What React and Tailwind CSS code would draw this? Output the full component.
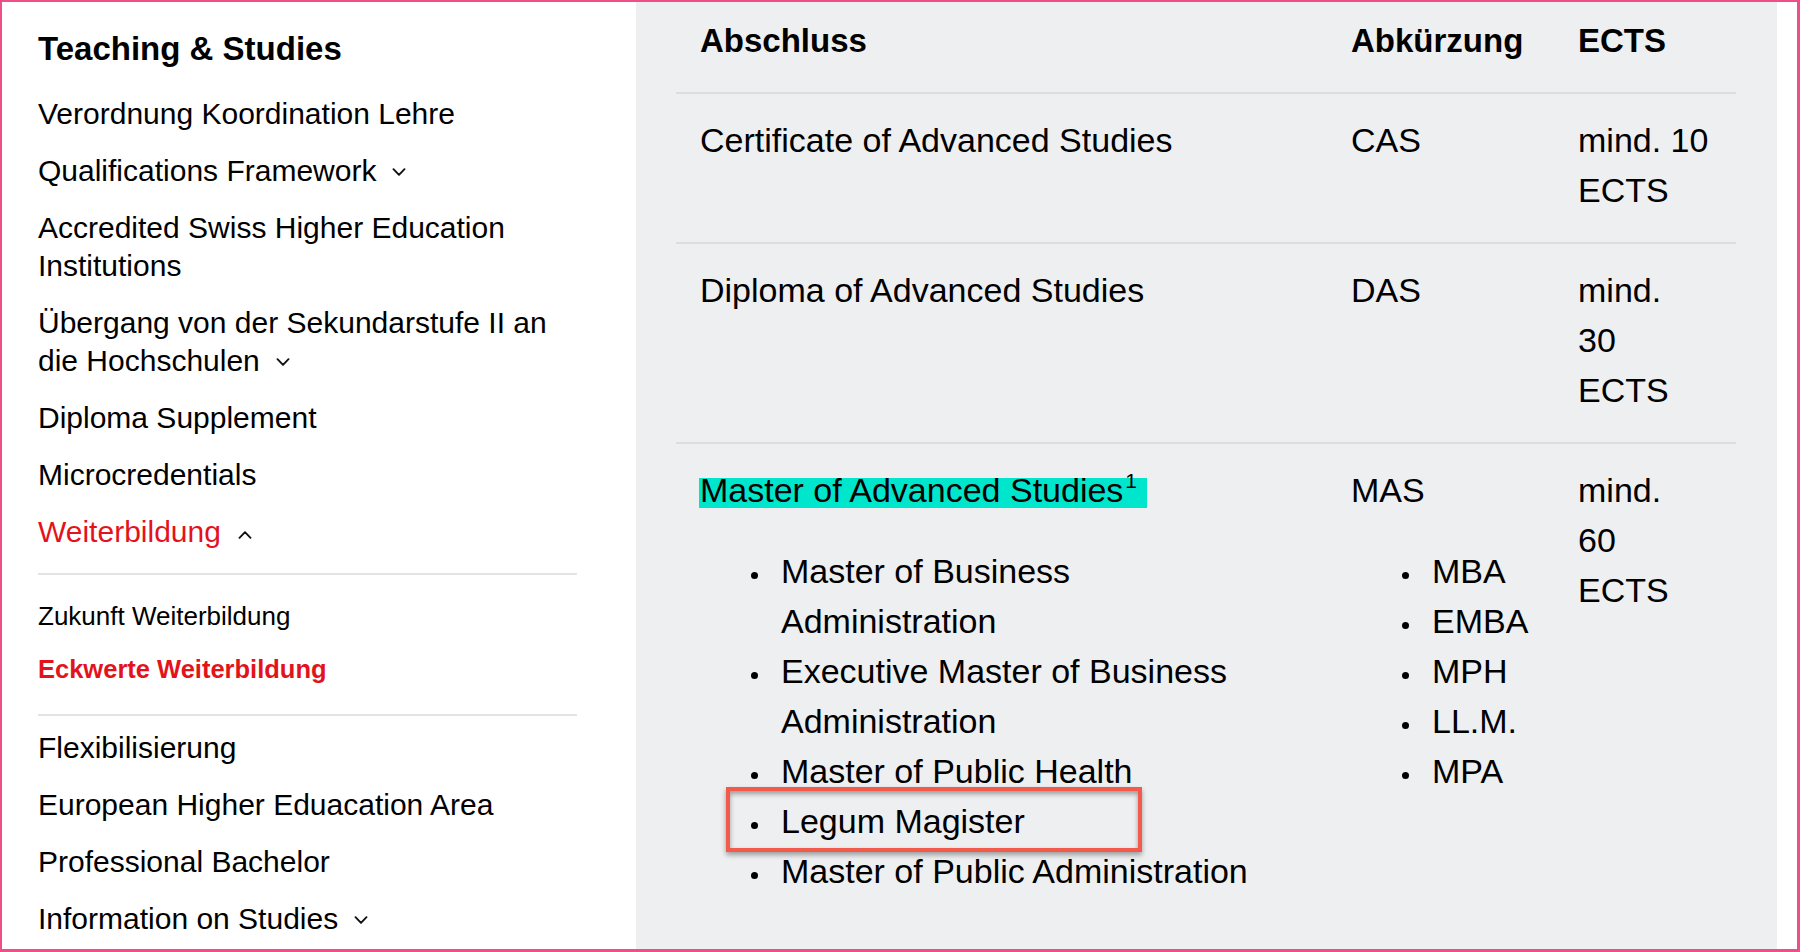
import React from "react";

const Chevron = ({ up = false }) => (
  <svg
    width="14"
    height="8"
    viewBox="0 0 14 8"
    fill="none"
    stroke="#111"
    strokeWidth="1.9"
    strokeLinecap="round"
    strokeLinejoin="round"
    className={up ? "inline-block ml-[17px] align-[3px]" : "inline-block ml-[16px] align-[5px]"}
  >
    <polyline points={up ? "1.5,6.8 7,1.2 12.5,6.8" : "1.5,1.2 7,6.8 12.5,1.2"} />
  </svg>
);

const NavItem = ({ children, className = "mt-[19px]" }) => (
  <div className={`${className} text-[30px] leading-[38px] text-black`}>{children}</div>
);

const Li = ({ children, annotate = false }) => (
  <li className="relative flex">
    <span className="mt-[26px] w-[7px] h-[7px] rounded-full bg-black shrink-0" />
    <span className="ml-[23px]">{children}</span>
    {annotate && (
      <span className="absolute left-[-25px] top-[-9px] w-[416px] h-[65px] border-4 border-[#f25a4c] shadow-[0_3px_5px_rgba(0,0,0,0.35),inset_0_3px_5px_rgba(0,0,0,0.35)]" />
    )}
  </li>
);

export default function App() {
  return (
    <div className="w-[1800px] h-[952px] box-border border-t-2 border-l-2 border-r-[3px] border-b-[3px] border-[#f04e89] bg-white flex overflow-hidden font-['Liberation_Sans',Arial,sans-serif] text-black">
      {/* Sidebar */}
      <aside className="w-[634px] shrink-0 pl-[36px] pt-[27px]">
        <div className="w-[539px]">
          <div className="text-[33px] leading-[40px] font-bold">Teaching &amp; Studies</div>
          <NavItem className="mt-[26px]">Verordnung Koordination Lehre</NavItem>
          <NavItem>
            Qualifications Framework
            <Chevron />
          </NavItem>
          <NavItem>Accredited Swiss Higher Education Institutions</NavItem>
          <NavItem>
            Übergang von der Sekundarstufe II an die Hochschulen
            <Chevron />
          </NavItem>
          <NavItem>Diploma Supplement</NavItem>
          <NavItem>Microcredentials</NavItem>
          <NavItem>
            <span className="text-[#e3131c]">Weiterbildung</span>
            <Chevron up />
          </NavItem>
          <div className="mt-[22px] h-[2px] bg-[#e3e3e4]" />
          <div className="mt-[22px] text-[26px] leading-[38px]">Zukunft Weiterbildung</div>
          <div className="mt-[15px] text-[25.5px] leading-[38px] font-bold text-[#e3131c]">
            Eckwerte Weiterbildung
          </div>
          <div className="mt-[26px] h-[2px] bg-[#e3e3e4]" />
          <NavItem className="mt-[13px]">Flexibilisierung</NavItem>
          <NavItem>European Higher Eduacation Area</NavItem>
          <NavItem>Professional Bachelor</NavItem>
          <NavItem>
            Information on Studies
            <Chevron />
          </NavItem>
        </div>
      </aside>

      {/* Main content */}
      <main className="w-[1141px] shrink-0 bg-[#eeeff1] pl-[40px]">
        <div className="w-[1060px]">
          {/* Header */}
          <div className="grid grid-cols-[651px_227px_182px] text-[33px] leading-[50px] font-bold">
            <div className="px-6 pt-[14px] pb-[26px]">Abschluss</div>
            <div className="px-6 pt-[14px] pb-[26px]">Abkürzung</div>
            <div className="px-6 pt-[14px] pb-[26px]">ECTS</div>
          </div>

          {/* Row 1 */}
          <div className="grid grid-cols-[651px_227px_182px] border-t-2 border-[#dcdde0] text-[34px] leading-[50px]">
            <div className="px-6 pt-[21px] pb-[27px]">Certificate of Advanced Studies</div>
            <div className="px-6 pt-[21px] pb-[27px]">CAS</div>
            <div className="px-6 pt-[21px] pb-[27px]">
              mind. 10
              <br />
              ECTS
            </div>
          </div>

          {/* Row 2 */}
          <div className="grid grid-cols-[651px_227px_182px] border-t-2 border-[#dcdde0] text-[34px] leading-[50px]">
            <div className="px-6 pt-[21px] pb-[27px]">Diploma of Advanced Studies</div>
            <div className="px-6 pt-[21px] pb-[27px]">DAS</div>
            <div className="px-6 pt-[21px] pb-[27px]">
              mind.
              <br />
              30
              <br />
              ECTS
            </div>
          </div>

          {/* Row 3 */}
          <div className="grid grid-cols-[651px_227px_182px] border-t-2 border-[#dcdde0] text-[34px] leading-[50px]">
            <div className="px-6 pt-[21px] pb-[27px]">
              <div>
                <span className="inline-block -ml-px pl-px pr-[10px] leading-[24px] pb-[6px] bg-[#00e6cc]">
                  Master of Advanced Studies
                  <sup className="text-[21px] top-[-14px] ml-[2px]">1</sup>
                </span>
              </div>
              <ul className="mt-[31px] pl-[51px] pr-[30px]">
                <Li>Master of Business Administration</Li>
                <Li>Executive Master of Business Administration</Li>
                <Li>Master of Public Health</Li>
                <Li annotate>Legum Magister</Li>
                <Li>Master of Public Administration</Li>
              </ul>
            </div>
            <div className="px-6 pt-[21px] pb-[27px]">
              <div>MAS</div>
              <ul className="mt-[31px] pl-[51px]">
                <Li>MBA</Li>
                <Li>EMBA</Li>
                <Li>MPH</Li>
                <Li>LL.M.</Li>
                <Li>MPA</Li>
              </ul>
            </div>
            <div className="px-6 pt-[21px] pb-[27px]">
              mind.
              <br />
              60
              <br />
              ECTS
            </div>
          </div>
        </div>
      </main>

      <div className="flex-1 bg-white" />
    </div>
  );
}
